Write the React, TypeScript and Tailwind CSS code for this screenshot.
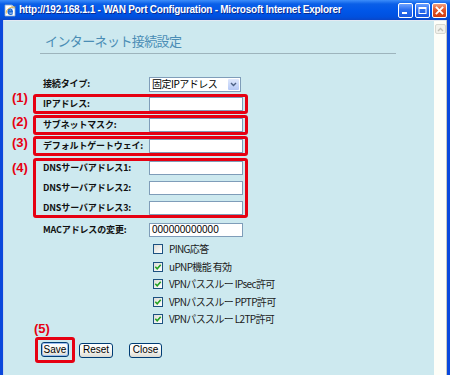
import React from "react";

const RED = "border-[#e60012]";

function Ann({ n, mt }: { n: string; mt: string }) {
  return (
    <div
      className={`w-[21px] shrink-0 text-[13px] font-bold leading-[10px] text-[#e60012] font-['Liberation_Sans',sans-serif] ${mt}`}
    >
      {n}
    </div>
  );
}

const LABEL =
  "w-[106px] shrink-0 text-[9px] font-bold leading-[14px] tracking-[-0.15px] text-[#111] font-['Noto_Sans_CJK_JP',sans-serif] whitespace-nowrap";

function Field({ label, value }: { label: string; value?: string }) {
  return (
    <div className="flex items-center h-[14px]">
      <span className={LABEL}>{label}</span>
      <div className="w-[94px] h-[14px] border border-[#7f9db9] bg-white text-[10px] leading-[12px] pl-[2px] text-black font-['Liberation_Sans',sans-serif]">
        {value}
      </div>
    </div>
  );
}

function Check({ label, checked, h }: { label: string; checked: boolean; h: string }) {
  return (
    <div className={`flex items-center ml-[149px] ${h}`}>
      <span className="w-[10px] h-[10px] border border-[#1c5180] bg-[linear-gradient(135deg,#dcdcd6,#ffffff)] flex items-center justify-center">
        {checked && (
          <svg width="8" height="8" viewBox="0 0 8 8">
            <path d="M1.3 3.8 L3.2 5.8 L6.7 1.8" fill="none" stroke="#21a121" strokeWidth="1.6" />
          </svg>
        )}
      </span>
      <span className="ml-[6px] text-[10px] leading-[12px] tracking-[-0.65px] text-[#1a1a1a] font-['Noto_Sans_CJK_JP',sans-serif] whitespace-nowrap">
        {label}
      </span>
    </div>
  );
}

function XpButton({ label, w, focus }: { label: string; w: string; focus?: boolean }) {
  return (
    <div
      className={`${w} h-[15px] rounded-[3px] border border-[#003c74] bg-[linear-gradient(180deg,#ffffff_0%,#f4f4f0_60%,#dcdad2_100%)] flex items-center justify-center text-[10px] leading-[12px] text-black font-['Liberation_Sans',sans-serif] ${
        focus ? "shadow-[inset_0_0_0_1px_#9bbcf0]" : ""
      }`}
    >
      {label}
    </div>
  );
}

function TitleBtn({ kind }: { kind: "min" | "max" | "close" }) {
  const bg =
    kind === "close"
      ? "bg-[linear-gradient(180deg,#f0a080_0%,#e2582c_45%,#d03c10_100%)]"
      : "bg-[linear-gradient(180deg,#6ea2ff_0%,#2a6ef0_45%,#1a58e0_100%)]";
  return (
    <div className={`w-[15px] h-[15px] rounded-[2px] border border-white ${bg} flex items-center justify-center`}>
      <svg width="11" height="11" viewBox="0 0 11 11">
        {kind === "min" && <rect x="2" y="7" width="5" height="2" fill="#fff" />}
        {kind === "max" && (
          <g fill="none" stroke="#fff">
            <rect x="2" y="2.5" width="7" height="6" strokeWidth="1" />
            <line x1="2" y1="3" x2="9" y2="3" strokeWidth="2" />
          </g>
        )}
        {kind === "close" && (
          <g stroke="#fff" strokeWidth="1.8" strokeLinecap="square">
            <line x1="2.5" y1="2.5" x2="8.5" y2="8.5" />
            <line x1="8.5" y1="2.5" x2="2.5" y2="8.5" />
          </g>
        )}
      </svg>
    </div>
  );
}

export default function App() {
  return (
    <div className="w-[450px] h-[375px] overflow-hidden flex flex-col bg-[#0a48dc]">
      {/* Title bar */}
      <div className="h-[20px] shrink-0 flex items-center bg-[linear-gradient(180deg,#3d8dfa_0%,#0a5fe8_20%,#0056e8_55%,#0050de_85%,#0a46c8_100%)]">
        <div className="ml-[4px] w-[13px] h-[13px] flex items-center justify-center">
          <svg width="13" height="13" viewBox="0 0 13 13">
            <path d="M1 1 H8 L11 4 V12 H1 Z" fill="#fff" stroke="#8aa8c8" strokeWidth="0.8" />
            <path d="M8 1 V4 H11" fill="#e0e8f0" stroke="#8aa8c8" strokeWidth="0.8" />
            <path
              d="M9 8 H4.2 C4.3 9.5 5.3 10.3 6.6 10.3 C7.5 10.3 8.2 9.9 8.6 9.3 M4.2 7 H8.2 C8 5.7 7.3 5 6.3 5 C5 5 4.2 6 4.2 7.6"
              fill="none"
              stroke="#1b6ad8"
              strokeWidth="1.5"
            />
            <path d="M2.5 9.5 C1 6 6 2.5 11.5 3" fill="none" stroke="#f0b020" strokeWidth="0.9" />
          </svg>
        </div>
        <span className="ml-[2px] text-white text-[10px] font-bold tracking-[-0.25px] leading-[12px] whitespace-nowrap font-['Liberation_Sans',sans-serif] [text-shadow:1px_1px_0_#0a2a90]">
          http://192.168.1.1 - WAN Port Configuration - Microsoft Internet Explorer
        </span>
        <div className="ml-auto mr-[3px] flex gap-[2px]">
          <TitleBtn kind="min" />
          <TitleBtn kind="max" />
          <TitleBtn kind="close" />
        </div>
      </div>

      {/* Body */}
      <div className="flex flex-1 min-h-0">
        <div className="w-[3px] shrink-0 bg-[#0a48dc]" />
        <div className="w-[1px] shrink-0 bg-[#c8d8ec]" />
        <div className="flex flex-col flex-1 min-w-0">
          <div className="h-[1px] bg-[#e4eaf2]" />
          <div className="flex flex-1 min-h-0">
            {/* Content */}
            <div className="w-[430px] shrink-0 bg-[#cde9ef] flex flex-col">
              <div className="mt-[12px] ml-[41px] h-[16px] text-[13px] leading-[16px] tracking-[-0.6px] text-[#4a8db5] font-['Noto_Sans_CJK_JP',sans-serif]">
                インターネット接続設定
              </div>
              <div className="mt-[4px] ml-[36px] w-[356px] h-[1px] bg-[#9db4bc]" />

              <div className="pl-[8px] flex flex-col">
                {/* 接続タイプ */}
                <div className="flex mt-[23px]">
                  <div className="w-[21px] shrink-0" />
                  <div className="w-[215px] pl-[10px] flex items-center h-[14px]">
                    <span className={LABEL}>接続タイプ:</span>
                    <div className="w-[92px] h-[15px] border border-[#7f9db9] bg-white flex items-center">
                      <span className="flex-1 pl-[2px] text-[10px] leading-[12px] tracking-[-0.5px] text-black font-['Noto_Sans_CJK_JP',sans-serif] whitespace-nowrap">
                        固定IPアドレス
                      </span>
                      <div className="w-[11px] h-[11px] mr-[1px] rounded-[1px] bg-[linear-gradient(180deg,#dfe8fc,#b6c9f6)] flex items-center justify-center">
                        <svg width="7" height="5" viewBox="0 0 7 5">
                          <path d="M1 1 L3.5 3.5 L6 1" fill="none" stroke="#4d6185" strokeWidth="1.4" />
                        </svg>
                      </div>
                    </div>
                  </div>
                </div>

                {/* (1) */}
                <div className="flex mt-[3px]">
                  <Ann n="(1)" mt="-mt-[1px]" />
                  <div className={`w-[215px] h-[20px] border-[3px] ${RED} rounded-[3px] pl-[7px] flex items-center`}>
                    <Field label="IPアドレス:" />
                  </div>
                </div>
                {/* (2) */}
                <div className="flex mt-[1px]">
                  <Ann n="(2)" mt="mt-[2px]" />
                  <div className={`w-[215px] h-[20px] border-[3px] ${RED} rounded-[3px] pl-[7px] flex items-center`}>
                    <Field label="サブネットマスク:" />
                  </div>
                </div>
                {/* (3) */}
                <div className="flex mt-[1px]">
                  <Ann n="(3)" mt="mt-[2px]" />
                  <div className={`w-[215px] h-[20px] border-[3px] ${RED} rounded-[3px] pl-[7px] flex items-center`}>
                    <Field label="デフォルトゲートウェイ:" />
                  </div>
                </div>
                {/* (4) */}
                <div className="flex mt-[2px]">
                  <Ann n="(4)" mt="mt-[5px]" />
                  <div className={`w-[215px] border-[3px] ${RED} rounded-[3px] pl-[7px] flex flex-col gap-[6px]`}>
                    <Field label="DNSサーバアドレス1:" />
                    <Field label="DNSサーバアドレス2:" />
                    <Field label="DNSサーバアドレス3:" />
                  </div>
                </div>
                {/* MAC */}
                <div className="flex mt-[5px]">
                  <div className="w-[21px] shrink-0" />
                  <div className="w-[215px] pl-[10px]">
                    <Field label="MACアドレスの変更:" value="000000000000" />
                  </div>
                </div>
              </div>

              <div className="mt-[3px] flex flex-col">
                <Check label="PING応答" checked={false} h="h-[18px]" />
                <Check label="uPNP機能 有効" checked h="h-[17px]" />
                <Check label="VPNパススルー IPsec許可" checked h="h-[18px]" />
                <Check label="VPNパススルー PPTP許可" checked h="h-[17px]" />
                <Check label="VPNパススルー L2TP許可" checked h="h-[18px]" />
              </div>

              <div className="mt-[9px] ml-[31px] flex items-center">
                <div className={`relative border-[3px] ${RED} rounded-[3px] pt-[2px] pb-[3px] px-[3px]`}>
                  <span className="absolute left-[-4px] top-[-16px] text-[13px] font-bold leading-[10px] text-[#e60012] font-['Liberation_Sans',sans-serif]">
                    (5)
                  </span>
                  <XpButton label="Save" w="w-[28px]" focus />
                </div>
                <div className="ml-[4px]">
                  <XpButton label="Reset" w="w-[34px]" />
                </div>
                <div className="ml-[16px]">
                  <XpButton label="Close" w="w-[33px]" />
                </div>
              </div>
            </div>

            {/* Scrollbar */}
            <div className="w-[12px] shrink-0 bg-[#fefef8] flex flex-col items-center">
              <div className="mt-[3px] w-[11px] h-[10px] rounded-[2px] border border-[#d8d8d0] bg-[#f2f2ec] flex items-center justify-center">
                <svg width="7" height="5" viewBox="0 0 7 5">
                  <path d="M1 4 L3.5 1.5 L6 4" fill="none" stroke="#c0c0b8" strokeWidth="1.3" />
                </svg>
              </div>
            </div>
          </div>
        </div>
        <div className="w-[1px] shrink-0 bg-[#c8c8c0]" />
        <div className="w-[3px] shrink-0 bg-[#0a48dc]" />
      </div>
    </div>
  );
}
